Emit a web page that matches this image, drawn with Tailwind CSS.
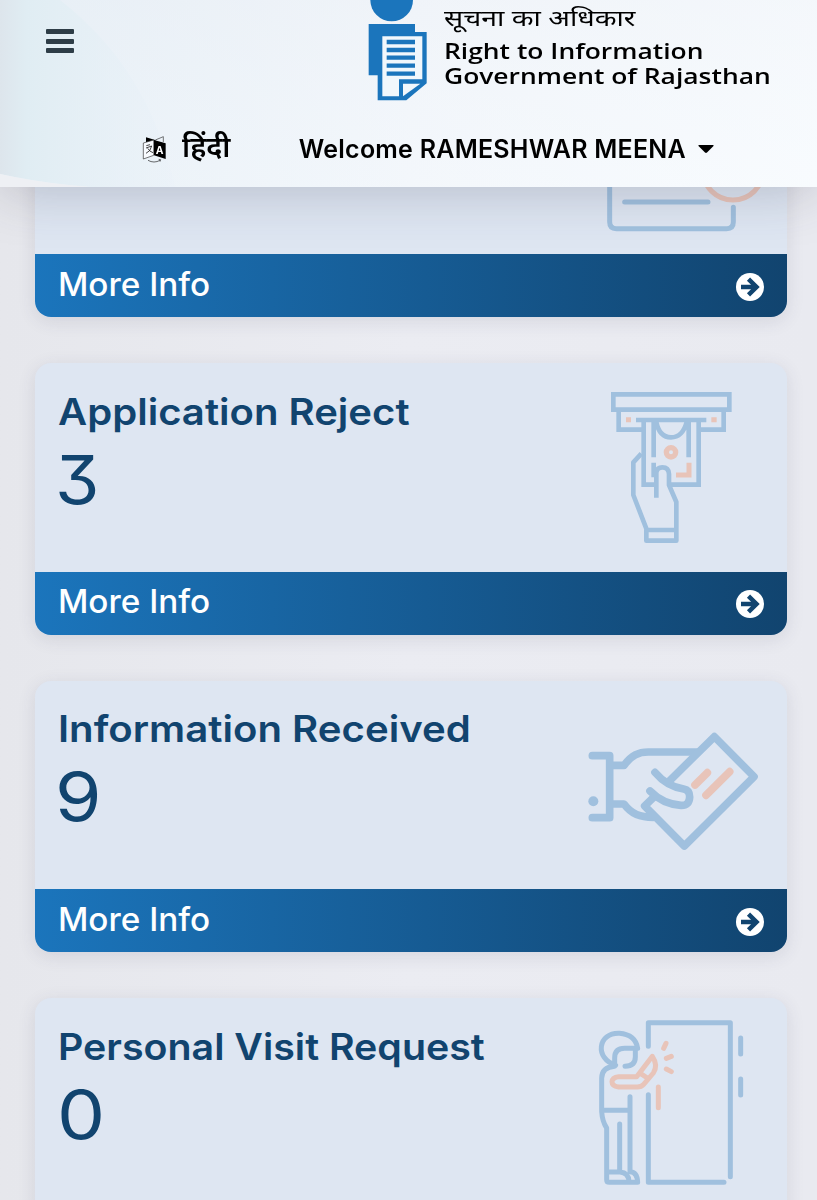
<!DOCTYPE html>
<html lang="en">
<head>
  <meta charset="UTF-8">
  <meta name="viewport" content="width=device-width, initial-scale=1.0">
  <title>Right to Information - Government of Rajasthan</title>
  <script src="https://cdn.jsdelivr.net/npm/@tailwindcss/browser@4"></script>
</head>
<body class="h-[1200px] overflow-hidden bg-[#e9eaf0] bg-linear-to-r from-[#e6e7ec] via-[#ebecf2] to-[#e9eaf0] font-['Inter',sans-serif] text-[#11446f]">
  <!-- Header -->
  <header class="fixed inset-x-0 top-0 z-10 h-[187px] overflow-hidden bg-linear-to-r from-[#e2ecf4] via-[#f1f5fa] to-[#f8fbfe] shadow-[0_4px_50px_rgba(60,60,80,0.25)]">
    <svg class="absolute inset-0 h-full w-full" viewBox="0 0 817 187" preserveAspectRatio="none">
      <defs>
        <linearGradient id="wash" x1="0" x2="1">
          <stop offset="0" stop-color="#dde5ec" />
          <stop offset="0.15" stop-color="#e0edf3" />
          <stop offset="1" stop-color="#e9f1f8" stop-opacity="0.3" />
        </linearGradient>
        <linearGradient id="fade" x1="0" y1="0" x2="0" y2="1">
          <stop offset="0" stop-color="#eef2f7" stop-opacity="0.4" />
          <stop offset="1" stop-color="#f8fcff" stop-opacity="0.3" />
        </linearGradient>
      </defs>
      <path d="M0 0H817V187H0Z" fill="url(#fade)" />
      <path d="M0 0H60Q150 70 175 187H90Q40 183 0 174Z" fill="url(#wash)" />
      <path d="M0 174Q40 183 90 187H0Z" fill="#eef0f4" />
    </svg>
    <div class="relative flex h-[110px] justify-between">
      <button class="mt-[29px] ml-[46px] flex h-6 w-7 flex-col justify-between" aria-label="Menu">
        <span class="h-[5px] w-full rounded-[1px] bg-[#2e3d47]"></span>
        <span class="h-[5px] w-full rounded-[1px] bg-[#2e3d47]"></span>
        <span class="h-[5px] w-full rounded-[1px] bg-[#2e3d47]"></span>
      </button>
      <div class="flex w-[450px]">
        <svg class="h-[110px] w-[68px] shrink-0" viewBox="52 0 204 330">
          <circle cx="126" cy="0" r="64" fill="#1b75bc" />
          <path d="M57 72H196V96H231V250L170 301H84V226H57Z" fill="#1b75bc" />
          <path d="M98 109H218V238H148V289H98Z" fill="#f1f7fc" />
          <path d="M160 251H212L160 289Z" fill="#f1f7fc" />
          <path d="M111 126H196M111 150H196M111 173H196M111 197H196M111 221H196" stroke="#1b75bc" stroke-width="13" />
        </svg>
        <div class="ml-[9px] text-black">
          <p class="h-[38px] w-[142px] origin-left scale-x-[1.29] pt-[3px] font-['Noto_Sans','Noto_Sans_Devanagari',sans-serif] text-[22px] leading-[28px] whitespace-nowrap">सूचना का अधिकार</p>
          <p class="w-[216px] origin-left scale-x-[1.2] font-['Open_Sans',sans-serif] text-[22px] leading-[25px] font-semibold whitespace-nowrap">Right to Information</p>
          <p class="w-[272px] origin-left scale-x-[1.2] font-['Open_Sans',sans-serif] text-[22px] leading-[25px] font-semibold whitespace-nowrap">Government of Rajasthan</p>
        </div>
      </div>
    </div>
    <div class="relative flex h-[77px] items-center text-black">
      <svg class="ml-[142px] h-7 w-6" viewBox="426 406 72 84">
        <path d="M438 413L468 422L438 430Z" fill="#000" />
        <path d="M466 421L490 411V427" fill="none" stroke="#333" stroke-width="2" />
        <path d="M430 430L461 421V467L430 478Z" fill="#f8fbff" stroke="#333" stroke-width="2" />
        <path d="M462 421L497 431V478L462 467Z" fill="#000" />
        <path d="M439 438L450 435M438 445L455 439Q452 455 438 461M443 446Q449 456 459 459" fill="none" stroke="#222" stroke-width="2.5" />
        <text x="467" y="462" font-family="Inter" font-size="31" font-weight="700" fill="#fff">A</text>
        <path d="M444 482Q462 492 480 482M476 479L482 480L480 486" fill="none" stroke="#222" stroke-width="2" />
      </svg>
      <span class="ml-4 pb-[5px] font-['Noto_Sans','Noto_Sans_Devanagari',sans-serif] text-[29px] leading-[40px] font-semibold">हिंदी</span>
      <span class="ml-auto pt-[2px] text-[25px] font-semibold tracking-[0.24px] whitespace-nowrap">Welcome RAMESHWAR MEENA</span>
      <svg class="mr-[103px] ml-3 h-2 w-4" viewBox="0 0 16 8"><path d="M1 0H15Q16 0 15.5 1L9 7.5Q8 8.300 7 7.500L.5 1Q0 0 1 0Z" /></svg>
    </div>
  </header>

  <!-- Dashboard cards -->
  <main class="flex h-[1200px] flex-col gap-[46px] overflow-hidden pt-[45.500px] pr-[30px] pl-[35px]">
    <section class="h-[271.500px] shrink-0 overflow-hidden rounded-2xl bg-[#dee6f2] shadow-[0_4px_18px_rgba(60,60,90,0.12)]">
      <div class="flex h-[208.500px] justify-end">
        <svg class="mt-[134px] h-[74px] w-[197px]" viewBox="0 0 591 222" fill="none" stroke="#a0c0de" stroke-width="15" stroke-linecap="round">
          <path d="M59 -60V126Q59 146 79 146H410Q430 146 430 126V82M104 66H354" />
          <circle cx="429" cy="-31" r="91" stroke="#e8c4b9" />
        </svg>
      </div>
      <a href="#" class="flex h-[63px] items-center justify-between bg-linear-to-r from-[#1b75bc] to-[#11446f] pr-[23px] pb-px pl-[23px] text-[32px] text-white">
        <span class="w-fit origin-left scale-x-[1.04] font-medium">More Info</span>
        <svg class="mt-1 h-7 w-7" viewBox="0 0 28 28"><circle cx="14" cy="14" r="14" fill="#fff" /><path d="M5 14H21M12.500 6.200L20.500 14L12.500 21.800" fill="none" stroke="#11446f" stroke-width="4.500" /></svg>
      </a>
    </section>

    <section class="h-[271.500px] shrink-0 overflow-hidden rounded-2xl bg-[#dee6f2] shadow-[0_4px_18px_rgba(60,60,90,0.12)]">
      <div class="flex h-[208.500px] justify-between pr-[17px] pl-[23px]">
        <div class="pt-[23.500px]">
          <h2 class="w-fit origin-left scale-x-[1.083] text-[37px] leading-[50px] font-semibold whitespace-nowrap">Application Reject</h2>
          <p class="mt-px -ml-[3px] w-fit origin-left scale-x-[1.07] text-[67px] leading-[84px] [font-feature-settings:'cv09']">3</p>
        </div>
        <svg class="mt-[11.500px] h-[180px] w-[180px]" viewBox="0 0 540 540" fill="none" stroke="#a0c0de" stroke-width="14">
          <path d="M70 58H418V104H70ZM86 104V164H161M401 104V164H326M138 135H349" />
          <path d="M161 135V329H197M326 135V329H240M191 141V247M296 141V247M191 263V307M199 141Q208 187 243 187T290 141" />
          <path d="M154 236L130 262V360L169 461M199 368V292Q201 277 217 277Q236 277 237 297V330L259 381V497H169V465H259" stroke-linejoin="round" />
          <circle cx="243" cy="232" r="14" stroke="#e8c4b9" stroke-width="16" />
          <path d="M297 263V300H258" stroke="#e8c4b9" stroke-width="15" />
          <path d="M108 127H123V142H108ZM364 127H380V142H364Z" fill="#e8c4b9" stroke="none" />
        </svg>
      </div>
      <a href="#" class="flex h-[63px] items-center justify-between bg-linear-to-r from-[#1b75bc] to-[#11446f] pr-[23px] pb-[3px] pl-[23px] text-[32px] text-white">
        <span class="w-fit origin-left scale-x-[1.04] font-medium">More Info</span>
        <svg class="mt-1 h-7 w-7" viewBox="0 0 28 28"><circle cx="14" cy="14" r="14" fill="#fff" /><path d="M5 14H21M12.500 6.200L20.500 14L12.500 21.800" fill="none" stroke="#11446f" stroke-width="4.500" /></svg>
      </a>
    </section>

    <section class="h-[271.500px] shrink-0 overflow-hidden rounded-2xl bg-[#dee6f2] shadow-[0_4px_18px_rgba(60,60,90,0.12)]">
      <div class="flex h-[208.500px] justify-between pr-[12px] pl-[23px]">
        <div class="pt-[23.500px]">
          <h2 class="w-fit origin-left scale-x-[1.085] text-[37px] leading-[50px] font-semibold whitespace-nowrap">Information Received</h2>
          <p class="mt-px -ml-[3px] w-fit origin-left scale-x-[1.12] text-[67px] leading-[84px]">9</p>
        </div>
        <svg class="mt-[34px] h-[150px] w-[200px]" viewBox="0 0 600 450" fill="none" stroke="#a0c0de" stroke-width="23" stroke-linecap="round" stroke-linejoin="round">
          <path d="M52 122H104V308H52M104 151H147C170 121 190 111 220 111H368M104 267H147C170 298 195 307 235 307" />
          <path d="M284 197L418 65L537 185L328 393L209 273L236 247" />
          <path d="M240 172Q275 214 326 222Q344 225 344 246Q343 272 318 271Q263 267 225 228" />
          <circle cx="55" cy="259" r="15" fill="#a0c0de" stroke="none" />
          <path d="M397 173L360 210M464 170L393 241" stroke="#e8c4b9" />
        </svg>
      </div>
      <a href="#" class="flex h-[63px] items-center justify-between bg-linear-to-r from-[#1b75bc] to-[#11446f] pr-[23px] pb-px pl-[23px] text-[32px] text-white">
        <span class="w-fit origin-left scale-x-[1.04] font-medium">More Info</span>
        <svg class="mt-1 h-7 w-7" viewBox="0 0 28 28"><circle cx="14" cy="14" r="14" fill="#fff" /><path d="M5 14H21M12.500 6.200L20.500 14L12.500 21.800" fill="none" stroke="#11446f" stroke-width="4.500" /></svg>
      </a>
    </section>

    <section class="h-[271.500px] shrink-0 overflow-hidden rounded-2xl bg-[#dee6f2] shadow-[0_4px_18px_rgba(60,60,90,0.12)]">
      <div class="flex h-[208.500px] justify-between pr-[22px] pl-[23px]">
        <div class="pt-[23.500px]">
          <h2 class="w-fit origin-left scale-x-[1.063] text-[37px] leading-[50px] font-semibold whitespace-nowrap">Personal Visit Request</h2>
          <p class="mt-px -ml-px w-fit origin-left scale-x-[1.14] text-[67px] leading-[84px]">0</p>
        </div>
        <svg class="mt-[6.500px] h-[195px] w-[180px]" viewBox="0 0 540 585" fill="none" stroke="#a0c0de" stroke-width="15" stroke-linecap="round" stroke-linejoin="round">
          <path d="M190 124V53H436V515M190 269V532H417M467 99V147M467 222V270" />
          <path d="M92 181C28 160 38 83 103 85Q151 89 158 130H119Q89 130 89 159V184Q50 187 50 220V320Q52 350 65 369V524Q65 532 73 532H158Q157 501 135 500V275M151 134V156Q151 183 120 184M54 316H135M104 357V500M68 501H105Q131 503 132 530" />
          <path d="M101 215H155L202 154Q220 180 205 204L176 238Q169 246 157 246H101Q81 243 81 230Q82 217 101 215ZM166 205L187 219M220 246V308M243 115L236 130M259 154L244 160M244 192L259 200" stroke="#e8c4b9" />
        </svg>
      </div>
    </section>
  </main>
</body>
</html>
